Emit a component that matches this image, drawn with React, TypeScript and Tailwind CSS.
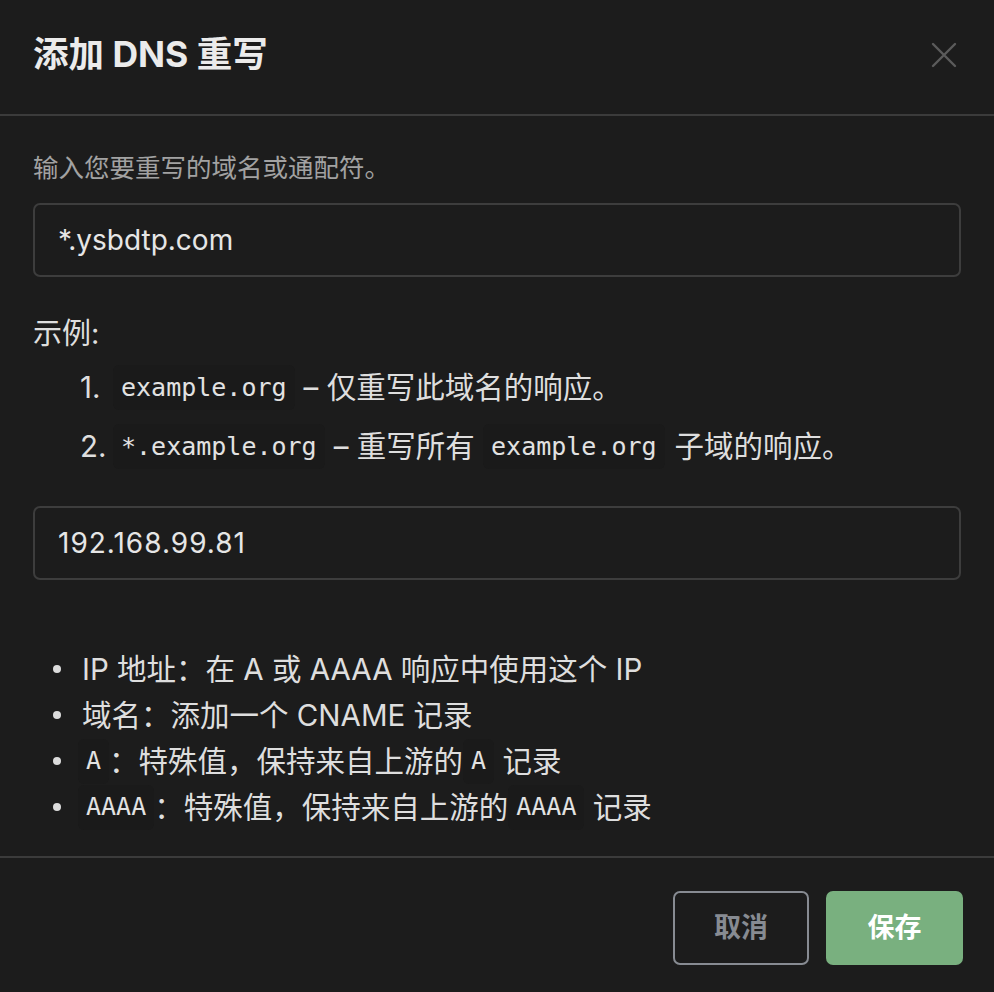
import React from "react";

const FONT = 'Inter, "Noto Sans CJK SC", sans-serif';
const MONO = '"DejaVu Sans Mono", "Liberation Mono", "Noto Sans CJK SC", monospace';

function Code({ children, className = "" }: { children: React.ReactNode; className?: string }) {
  return (
    <span
      className={`inline-flex items-center h-[45px] px-[8px] rounded-[6px] bg-[#1a1a1a] text-[25px] text-[#e2e2e2] ${className}`}
      style={{ fontFamily: MONO }}
    >
      {children}
    </span>
  );
}

function Bullet({ children }: { children: React.ReactNode }) {
  return (
    <li className="flex items-center h-[46px]">
      <span className="w-[8px] h-[8px] rounded-full bg-[#dcdcdc] mr-[21px] shrink-0" />
      <span className="flex items-center whitespace-pre">{children}</span>
    </li>
  );
}

export default function App() {
  return (
    <div
      className="w-[994px] h-[992px] bg-[#1c1c1c] flex flex-col text-[#dedede]"
      style={{ fontFamily: FONT }}
    >
      {/* header */}
      <div className="h-[116px] shrink-0 px-[33px] flex items-center justify-between border-b-2 border-[#3b3b3b]">
        <h2 className="text-[35.5px] font-bold text-[#ebebeb] leading-none mt-[-4px]">添加 DNS 重写</h2>
        <svg width="26" height="26" viewBox="0 0 26 26" className="mr-[4px] mt-[-4px]">
          <path d="M2 2 L24 24 M24 2 L2 24" stroke="#5b5b5b" strokeWidth="2.4" strokeLinecap="round" />
        </svg>
      </div>

      {/* body */}
      <div className="flex-1 px-[33px] pt-[33px]">
        <p className="text-[25.5px] leading-[37px] text-[#a2a2a2]">输入您要重写的域名或通配符。</p>
        <div className="mt-[17px] h-[74px] border-2 border-[#3d3d3d] rounded-[7px] pl-[23px] flex items-center text-[28px] text-[#e6e6e6]">
          *.ysbdtp.com
        </div>

        <div className="mt-[36px] text-[29px] leading-[42px]">示例:</div>
        <ol className="text-[29.5px]">
          <li className="flex items-center h-[47px] mt-[9px]">
            <span className="w-[33px] ml-[47px]">1.</span>
            <Code>example.org</Code>
            <span className="ml-[9px] whitespace-pre">– 仅重写此域名的响应。</span>
          </li>
          <li className="flex items-center h-[47px] mt-[12px]">
            <span className="w-[33px] ml-[47px]">2.</span>
            <Code>*.example.org</Code>
            <span className="ml-[9px] whitespace-pre">– 重写所有 </span>
            <Code>example.org</Code>
            <span className="ml-[10px]">子域的响应。</span>
          </li>
        </ol>

        <div className="mt-[36px] h-[74px] border-2 border-[#3d3d3d] rounded-[7px] pl-[23px] flex items-center text-[28px] tracking-[1px] text-[#e6e6e6]">
          192.168.99.81
        </div>

        <ul className="mt-[66px] pl-[20px] text-[29.5px]">
          <Bullet>IP 地址：在 A 或 AAAA 响应中使用这个 IP</Bullet>
          <Bullet>域名：添加一个 CNAME 记录</Bullet>
          <Bullet>
            <Code className="ml-[-4px]">A</Code>
            <span>：特殊值，保持来自上游的</span>
            <Code>A</Code>
            <span> 记录</span>
          </Bullet>
          <Bullet>
            <Code className="ml-[-4px]">AAAA</Code>
            <span>：特殊值，保持来自上游的</span>
            <Code>AAAA</Code>
            <span> 记录</span>
          </Bullet>
        </ul>
      </div>

      {/* footer */}
      <div className="h-[136px] shrink-0 border-t-2 border-[#3b3b3b] px-[31px] pt-[33px] flex justify-end gap-[17px]">
        <button className="w-[136px] h-[74px] rounded-[7px] border-2 border-[#878b92] text-[#878b92] text-[27px] font-bold flex items-center justify-center">
          取消
        </button>
        <button className="w-[137px] h-[74px] rounded-[7px] bg-[#79b07f] text-white text-[27px] font-bold flex items-center justify-center">
          保存
        </button>
      </div>
    </div>
  );
}
